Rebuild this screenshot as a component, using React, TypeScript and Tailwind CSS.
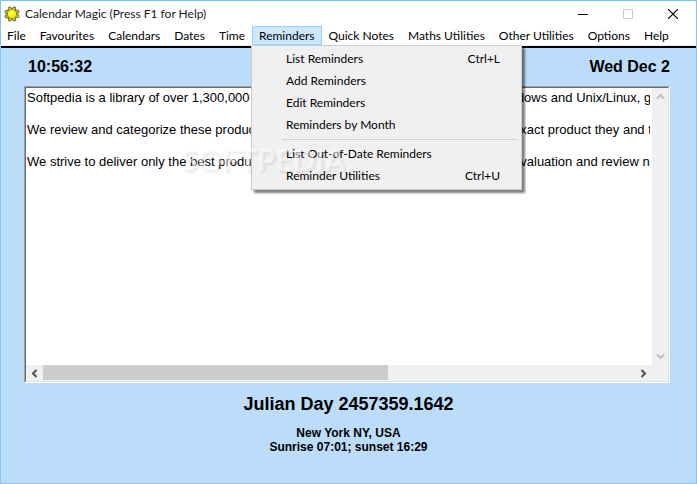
import { useState } from "react";

const MENUS = [
  "File",
  "Favourites",
  "Calendars",
  "Dates",
  "Time",
  "Reminders",
  "Quick Notes",
  "Maths Utilities",
  "Other Utilities",
  "Options",
  "Help",
];

const REMINDER_ITEMS = [
  [
    { label: "List Reminders", keys: "Ctrl+L" },
    { label: "Add Reminders" },
    { label: "Edit Reminders" },
    { label: "Reminders by Month" },
  ],
  [
    { label: "List Out-of-Date Reminders" },
    { label: "Reminder Utilities", keys: "Ctrl+U" },
  ],
];

const NOTES = [
  "Softpedia is a library of over 1,300,000 free and free-to-try software programs for Windows and Unix/Linux, games and gaming tools.",
  "We review and categorize these products in order to allow the visitor/user to find the exact product they and their system needs.",
  "We strive to deliver only the best products to the visitor/user together with self-made evaluation and review notes.",
].join("\n\n");

const RAYS = [0, 45, 90, 135, 180, 225, 270, 315];

function SunIcon() {
  return (
    <svg width="16" height="16" viewBox="0 0 16 16" aria-hidden="true">
      {RAYS.map((angle) => (
        <path
          key={angle}
          d="M5.8 3.6 7 .9 8.6.5 10.2 3.6z"
          transform={`rotate(${angle + 22} 8 8)`}
          fill="#dcd420"
          stroke="#66664a"
          strokeWidth="0.9"
        />
      ))}
      <circle cx="8" cy="8" r="4.7" fill="#f4f000" stroke="#8c8a10" strokeWidth="0.8" />
      <circle cx="7.4" cy="7.2" r="2.4" fill="#ffff50" />
    </svg>
  );
}

function Chevron({ d, color }: { d: string; color: string }) {
  return (
    <svg width="9" height="9" viewBox="0 0 9 9" aria-hidden="true">
      <path d={d} fill="none" stroke={color} strokeWidth="2" />
    </svg>
  );
}

function TitleBar() {
  return (
    <header className="flex h-[25px] items-center pl-[3px] text-[#1a1a1a]">
      <SunIcon />
      <h1 className="ml-[5px] flex-1 whitespace-nowrap">Calendar Magic (Press F1 for Help)</h1>
      <button type="button" aria-label="Minimise" className="flex w-[45px] justify-center">
        <svg width="10" height="10" shapeRendering="crispEdges">
          <path d="M0 5.5h10" stroke="#000" />
        </svg>
      </button>
      <button type="button" aria-label="Maximise" disabled className="flex w-[45px] justify-center">
        <svg width="10" height="10" shapeRendering="crispEdges">
          <path d="M.5.5h9v9h-9z" fill="none" stroke="#ccc" />
        </svg>
      </button>
      <button type="button" aria-label="Close" className="flex w-[46px] justify-center">
        <svg width="10" height="10">
          <path d="M0 0l10 10M10 0L0 10" stroke="#000" strokeWidth="1.2" />
        </svg>
      </button>
    </header>
  );
}

function ReminderMenu() {
  return (
    <div
      role="menu"
      className="absolute top-full -left-px z-10 w-[271px] border border-[#ccc] bg-[#f0f0f0] py-0.5 shadow-[3px_3px_2px_rgba(0,0,0,0.5)]"
    >
      {REMINDER_ITEMS.map((group, i) => (
        <div key={i}>
          {i > 0 && <div className="mt-[3px] mr-1 mb-[3px] ml-[30px] h-px bg-[#d0d0d0]" />}
          {group.map((item) => (
            <button
              key={item.label}
              type="button"
              role="menuitem"
              className="flex h-[22px] w-full items-center justify-between pr-[21px] pl-[34px] whitespace-nowrap"
            >
              <span>{item.label}</span>
              {item.keys && <span>{item.keys}</span>}
            </button>
          ))}
        </div>
      ))}
    </div>
  );
}

function MenuBar() {
  const [open, setOpen] = useState("Reminders");

  return (
    <nav className="-ml-px flex h-5 items-start border-b border-[#f0f0f0]">
      {MENUS.map((name) => (
        <div key={name} className="relative">
          <button
            type="button"
            onClick={() => setOpen(open === name ? "" : name)}
            className={
              open === name
                ? "block h-[19px] border border-[#99d1ff] bg-[#cce8ff] px-1.5 leading-[17px] whitespace-nowrap"
                : "block h-[19px] border border-transparent px-1.5 leading-[17px] whitespace-nowrap"
            }
          >
            {name}
          </button>
          {name === "Reminders" && open === name && <ReminderMenu />}
        </div>
      ))}
    </nav>
  );
}

function NotesBox() {
  return (
    <div className="mr-[26px] ml-[23px] border border-t-[#a0a0a0] border-r-white border-b-white border-l-[#a0a0a0]">
      <div className="border border-t-[#696969] border-r-[#e3e3e3] border-b-[#e3e3e3] border-l-[#696969] bg-[#f0f0f0]">
        <div className="flex h-[277px]">
          <textarea
            readOnly
            wrap="off"
            aria-label="Notes"
            defaultValue={NOTES}
            className="min-w-0 flex-1 resize-none overflow-hidden border-r-2 border-white bg-white pt-0.5 pl-px font-['Liberation_Sans',Arial,sans-serif] text-[13px] leading-4 whitespace-pre outline-none"
          />
          <div className="flex w-4 flex-col items-center justify-between py-1">
            <button type="button" aria-label="Scroll up">
              <Chevron d="M1 6.5 4.5 3 8 6.5" color="#bfbfbf" />
            </button>
            <button type="button" aria-label="Scroll down">
              <Chevron d="M1 2.5 4.5 6 8 2.5" color="#bfbfbf" />
            </button>
          </div>
        </div>
        <div className="flex h-4 pr-4">
          <button type="button" aria-label="Scroll left" className="flex w-[17px] items-center justify-center">
            <Chevron d="M6.5 1 3 4.5 6.5 8" color="#505050" />
          </button>
          <div className="flex-1">
            <div className="h-[15px] w-7/12 bg-[#cdcdcd]" />
          </div>
          <button type="button" aria-label="Scroll right" className="flex w-[17px] items-center justify-center">
            <Chevron d="M2.5 1 6 4.5 2.5 8" color="#505050" />
          </button>
        </div>
      </div>
    </div>
  );
}

export default function App() {
  return (
    <div className="relative flex min-h-screen flex-col border border-[#84c4fb] bg-white font-[Lato,'Segoe_UI',sans-serif] text-[12px] leading-4 text-black">
      <TitleBar />
      <MenuBar />
      <main className="flex-1 border-t-2 border-black bg-[#bbddf9] font-['Liberation_Sans',Arial,sans-serif] font-bold">
        <div className="flex h-[38px] items-center justify-between pr-[26px] pl-[27px] text-[16px]">
          <time>10:56:32</time>
          <time>Wed Dec 2</time>
        </div>
        <div className="font-normal">
          <NotesBox />
        </div>
        <footer className="text-center">
          <p className="mt-[10px] text-[18px] leading-[22px]">Julian Day 2457359.1642</p>
          <p className="mt-[11px] leading-[14px]">New York NY, USA</p>
          <p className="leading-[14px]">Sunrise 07:01; sunset 16:29</p>
        </footer>
      </main>
      <div
        aria-hidden="true"
        className="pointer-events-none absolute top-[138px] left-[180px] z-20 flex items-start font-[Lato,sans-serif] text-[30px] leading-[40px] font-bold text-white/50 [text-shadow:2px_2px_2px_rgba(0,0,0,0.08)]"
      >
        SOFTPEDIA
        <span className="text-[12px] leading-5">°</span>
      </div>
    </div>
  );
}
